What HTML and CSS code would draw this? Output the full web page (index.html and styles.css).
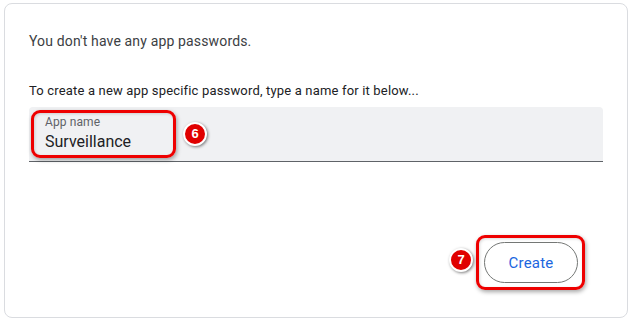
FILE: index.html
```html
<!DOCTYPE html>
<html>
<head>
<meta charset="utf-8">
<link rel="stylesheet" href="styles.css">
</head>
<body>
<div class="card">
  <p class="empty">You don't have any app passwords.</p>
  <p class="hint">To create a new app specific password, type a name for it below...</p>
  <div class="field">
    <div class="field-inner">
      <span class="label">App name</span>
      <span class="value">Surveillance</span>
      <span class="hl hl-field"></span>
      <span class="badge badge-6">6</span>
    </div>
  </div>
  <div class="actions">
    <div class="btn-wrap">
      <button class="btn">Create</button>
      <span class="hl hl-btn"></span>
      <span class="badge badge-7">7</span>
    </div>
  </div>
</div>
</body>
</html>
```

FILE: styles.css
```css
html, body {
  margin: 0;
  padding: 0;
  background: #ffffff;
}
body {
  font-family: Roboto, "Liberation Sans", Arial, sans-serif;
  padding: 3px 6px 6px 4px;
  width: 634px;
  height: 324px;
  box-sizing: border-box;
}
.card {
  border: 1px solid #dadce0;
  border-radius: 8px;
  height: 315px;
  box-sizing: border-box;
  padding: 0 24px 0 24px;
  display: flex;
  flex-direction: column;
}
.empty {
  margin: 27px 0 0 0;
  font-size: 14px;
  line-height: 20px;
  color: #3c4043;
  letter-spacing: 0.15px;
}
.hint {
  margin: 32px 0 0 0;
  font-size: 13px;
  line-height: 16px;
  color: #202124;
  letter-spacing: 0.17px;
}
.field {
  margin-top: 8px;
  height: 55px;
  background: #f0f1f3;
  border-radius: 4px 4px 0 0;
  border-bottom: 1px solid #5f6368;
  box-sizing: border-box;
}
.field-inner {
  position: relative;
  display: flex;
  flex-direction: column;
  padding: 7px 0 0 16px;
}
.label {
  font-size: 12px;
  line-height: 16px;
  color: #5f6368;
  letter-spacing: 0.1px;
}
.value {
  font-size: 16px;
  line-height: 20px;
  color: #202124;
  margin-top: 2px;
}
.hl {
  position: absolute;
  border: 3px solid #ee0000;
  border-radius: 9px;
  box-shadow: 1px 2px 4px rgba(0,0,0,0.35), inset 1px 1px 3px rgba(0,0,0,0.15);
  box-sizing: border-box;
}
.hl-field {
  left: 2px;
  top: 3px;
  width: 145px;
  height: 48px;
}
.badge {
  position: absolute;
  width: 20px;
  height: 20px;
  border-radius: 50%;
  background: #e00000;
  border: 2px solid #ffffff;
  box-shadow: 1px 1px 3px rgba(0,0,0,0.5);
  color: #ffffff;
  font-family: "Liberation Sans", Arial, sans-serif;
  font-weight: bold;
  font-size: 13px;
  line-height: 20px;
  text-align: center;
}
.badge-6 {
  left: 154px;
  top: 15px;
}
.actions {
  display: flex;
  justify-content: flex-end;
  margin-top: 80px;
  padding-right: 25px;
}
.btn-wrap {
  position: relative;
}
.btn {
  width: 94px;
  height: 41px;
  border: 1px solid #747775;
  border-radius: 21px;
  background: #ffffff;
  color: #1b66e0;
  font-family: Roboto, "Liberation Sans", Arial, sans-serif;
  font-size: 15px;
  letter-spacing: 0.2px;
  padding: 0;
  display: block;
}
.hl-btn {
  left: -8px;
  top: -7px;
  width: 109px;
  height: 55px;
}
.badge-7 {
  left: -35px;
  top: 6px;
}
```
